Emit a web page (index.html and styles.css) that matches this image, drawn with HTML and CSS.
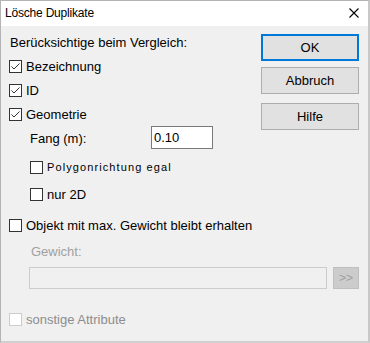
FILE: index.html
```html
<!DOCTYPE html>
<html lang="de">

<head>
  <meta charset="UTF-8">
  <title>Lösche Duplikate</title>
  <link rel="stylesheet" href="styles.css">
</head>

<body>
  <div class="dialog">
    <div class="titlebar">
      <span class="title">Lösche Duplikate</span>
      <svg class="close" width="10" height="10" viewBox="0 0 10 10">
        <path d="M0.5 0.5 L9.5 9.5 M9.5 0.5 L0.5 9.5" stroke="#000" stroke-width="1.1" fill="none" />
      </svg>
    </div>

    <div class="content">
      <div class="top">
        <div class="options">
          <div class="caption">Berücksichtige beim Vergleich:</div>

          <div class="check">
            <span class="box"><svg width="11" height="11" viewBox="0 0 11 11"><path d="M1.5 5.5 L4 8 L9.5 2.5" stroke="#333" stroke-width="1" fill="none" /></svg></span>
            <span>Bezeichnung</span>
          </div>
          <div class="check">
            <span class="box"><svg width="11" height="11" viewBox="0 0 11 11"><path d="M1.5 5.5 L4 8 L9.5 2.5" stroke="#333" stroke-width="1" fill="none" /></svg></span>
            <span>ID</span>
          </div>
          <div class="check">
            <span class="box"><svg width="11" height="11" viewBox="0 0 11 11"><path d="M1.5 5.5 L4 8 L9.5 2.5" stroke="#333" stroke-width="1" fill="none" /></svg></span>
            <span>Geometrie</span>
          </div>

          <div class="fang">
            <span class="fang-label">Fang (m):</span>
            <div class="field">0.10</div>
          </div>

          <div class="check sub small">
            <span class="box"></span>
            <span>Polygonrichtung egal</span>
          </div>
          <div class="check sub second">
            <span class="box"></span>
            <span>nur 2D</span>
          </div>
        </div>

        <div class="buttons">
          <div class="btn default">OK</div>
          <div class="btn">Abbruch</div>
          <div class="btn help">Hilfe</div>
        </div>
      </div>

      <div class="check objekt">
        <span class="box"></span>
        <span>Objekt mit max. Gewicht bleibt erhalten</span>
      </div>

      <div class="muted-label">Gewicht:</div>
      <div class="weight-row">
        <div class="field disabled"></div>
        <div class="btn mini">&gt;&gt;</div>
      </div>

      <div class="check disabled-check">
        <span class="box"></span>
        <span>sonstige Attribute</span>
      </div>
    </div>
  </div>
</body>

</html>
```

FILE: styles.css
```css
* {
  margin: 0;
  padding: 0;
  box-sizing: border-box;
}

body {
  background: #fff;
  font-family: "Liberation Sans", Arial, sans-serif;
  font-size: 13px;
  color: #000;
}

.dialog {
  width: 370px;
  height: 343px;
  border: 1px solid #b4b4b4;
  border-right: 2px solid #c8c8c8;
  border-bottom: 2px solid #d0d0d0;
  background: #f0f0f0;
}

/* 标题栏 */
.titlebar {
  height: 25px;
  background: #fff;
  display: flex;
  align-items: center;
  justify-content: space-between;
  padding: 0 9px 1px 4px;
}

.title {
  font-size: 12px;
  letter-spacing: -0.2px;
}

.close {
  display: block;
}

.content {
  padding: 8px 9px 0 8px;
}

.top {
  display: flex;
  justify-content: space-between;
}

.caption {
  height: 20px;
  line-height: 18px;
  padding-left: 1px;
}

.check {
  height: 24px;
  display: flex;
  align-items: center;
  gap: 4px;
}

.box {
  width: 13px;
  height: 13px;
  border: 1px solid #333;
  background: #fff;
  display: flex;
  align-items: center;
  justify-content: center;
}

.box svg {
  display: block;
}

.fang {
  height: 23px;
  display: flex;
  align-items: center;
  padding-left: 21px;
}

.fang-label {
  width: 121px;
  padding-top: 2px;
}

.field {
  width: 62px;
  height: 23px;
  border: 1px solid #7a7a7a;
  background: #fff;
  line-height: 21px;
  padding-left: 2px;
}

.sub {
  padding-left: 21px;
  margin-top: 6px;
}

.sub.second {
  margin-top: 3px;
}

.small span:last-child {
  font-size: 11px;
  letter-spacing: 1.1px;
}

/* 右侧按钮 */
.buttons {
  width: 98px;
  display: flex;
  flex-direction: column;
}

.btn {
  height: 27px;
  border: 1px solid #adadad;
  background: #e1e1e1;
  text-align: center;
  line-height: 25px;
  margin-bottom: 6px;
}

.btn.default {
  border: 2px solid #0078d7;
  line-height: 23px;
}

.btn.help {
  margin-top: 3px;
}

.objekt {
  margin-top: 7px;
}

.muted-label {
  color: #a0a0a0;
  height: 16px;
  line-height: 16px;
  margin-top: 7px;
  padding-left: 22px;
}

.weight-row {
  display: flex;
  justify-content: space-between;
  margin-top: 7px;
  padding-left: 20px;
}

.field.disabled {
  width: 298px;
  height: 22px;
  border-color: #cccccc;
  background: #f0f0f0;
}

.btn.mini {
  width: 26px;
  height: 22px;
  margin: 0;
  line-height: 20px;
  border-color: #bfbfbf;
  background: #cccccc;
  color: #a0a0a0;
  font-size: 12px;
}

.disabled-check {
  margin-top: 18px;
  color: #8d8d8d;
}

.disabled-check .box {
  border-color: #cccccc;
}
```
